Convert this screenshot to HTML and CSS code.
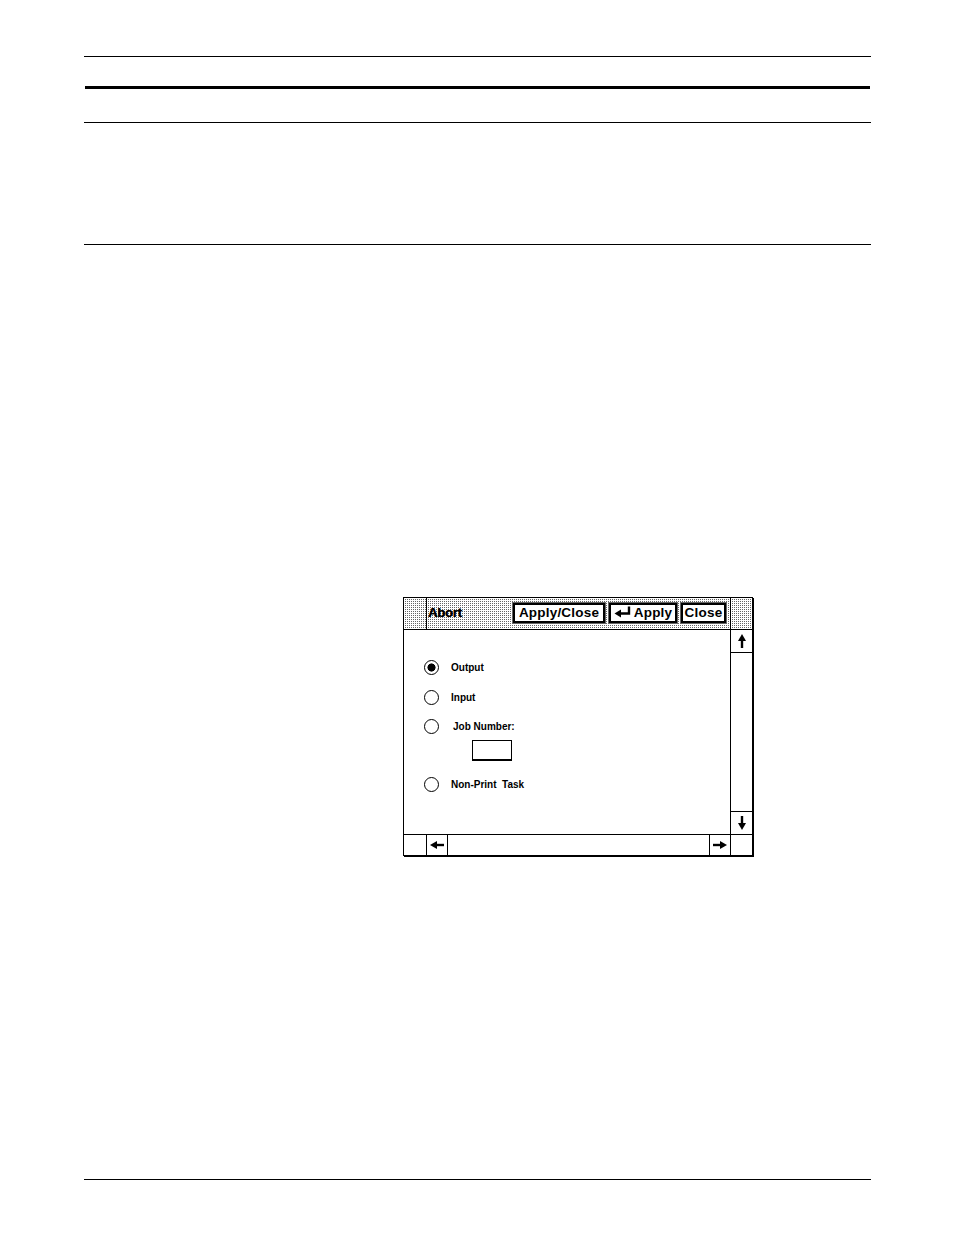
FILE: index.html
```html
<!DOCTYPE html>
<html>
<head>
<meta charset="utf-8">
<title>Abort</title>
<link rel="stylesheet" href="styles.css">
</head>
<body>
<div class="page">
  <div class="rule rule-1"></div>
  <div class="rule rule-thick"></div>
  <div class="rule rule-3"></div>
  <div class="rule rule-4"></div>

  <div class="dialog">
    <div class="cell stipple"></div>
    <div class="cell stipple title">
      <span class="title-text">Abort</span>
      <div class="buttons">
        <span class="btn btn-applyclose">Apply/Close</span>
        <span class="btn btn-apply"><svg class="ret" width="18" height="12" viewBox="0 0 18 12"><path d="M15 0.5 V7.5 H6" fill="none" stroke="#000" stroke-width="2.4"/><path d="M0.5 7.5 L7 3.5 L7 11.5 Z" fill="#000"/></svg>Apply</span>
        <span class="btn btn-close">Close</span>
      </div>
    </div>
    <div class="cell stipple"></div>

    <div class="cell content">
      <div class="opt opt-1"><span class="radio on"></span><span class="label">Output</span></div>
      <div class="opt opt-2"><span class="radio"></span><span class="label">Input</span></div>
      <div class="opt opt-3"><span class="radio"></span><span class="label label-job">Job Number:</span></div>
      <div class="jobbox"></div>
      <div class="opt opt-4"><span class="radio"></span><span class="label">Non-Print&nbsp; Task</span></div>
    </div>
    <div class="cell vscroll">
      <div class="arrowbox up"><svg width="12" height="16" viewBox="0 0 12 16"><path d="M6 1 L10 8 L2 8 Z" fill="#000"/><path d="M6 7 V15" stroke="#000" stroke-width="2.4"/></svg></div>
      <div class="track"></div>
      <div class="arrowbox down"><svg width="12" height="16" viewBox="0 0 12 16"><path d="M6 15 L10 8 L2 8 Z" fill="#000"/><path d="M6 1 V9" stroke="#000" stroke-width="2.4"/></svg></div>
    </div>

    <div class="cell"></div>
    <div class="cell hscroll">
      <div class="harrow left"><svg width="16" height="10" viewBox="0 0 16 10"><path d="M1 5 L8 1 L8 9 Z" fill="#000"/><path d="M7 5 H15" stroke="#000" stroke-width="2.4"/></svg></div>
      <div class="track"></div>
      <div class="harrow right"><svg width="16" height="10" viewBox="0 0 16 10"><path d="M15 5 L8 1 L8 9 Z" fill="#000"/><path d="M1 5 H9" stroke="#000" stroke-width="2.4"/></svg></div>
    </div>
    <div class="cell"></div>
  </div>

  <div class="rule rule-bottom"></div>
</div>
</body>
</html>
```
FILE: styles.css
```css
html, body {
  margin: 0;
  padding: 0;
  background: #fff;
}
body {
  width: 954px;
  font-family: "Liberation Sans", Arial, sans-serif;
  color: #000;
}
.page {
  padding-top: 56px;
}
.rule {
  margin-left: 84px;
  width: 787px;
  height: 1px;
  background: #000;
}
.rule-thick {
  margin-top: 29px;
  height: 3px;
  margin-left: 85px;
  width: 785px;
}
.rule-3 { margin-top: 33px; }
.rule-4 { margin-top: 121px; }
.rule-bottom { margin-top: 323px; }

.dialog {
  margin-top: 352px;
  margin-left: 403px;
  width: 348px;
  height: 257px;
  border: 1px solid #000;
  background: #000;
  box-shadow: 1px 1px 0 #000;
  display: grid;
  grid-template-columns: 22px 303px 21px;
  grid-template-rows: 31px 204px 20px;
  gap: 1px;
}
.cell {
  background: #fff;
  min-width: 0;
  min-height: 0;
}
.stipple {
  background-color: #fff;
  background-image:
    linear-gradient(90deg, #fff 50%, transparent 50%),
    linear-gradient(#fff 50%, #666 50%);
  background-size: 2px 2px;
}
.title {
  display: flex;
  align-items: center;
  justify-content: space-between;
  padding: 0 4px 0 1px;
}
.title-text {
  font-weight: bold;
  font-size: 13px;
  letter-spacing: -0.2px;
  margin-top: -2px;
  text-shadow: 0.4px 0 0 #000;
}
.buttons {
  display: flex;
  gap: 4px;
  margin-top: -2px;
}
.btn {
  box-sizing: border-box;
  height: 20px;
  background: #fff;
  border: 2px solid #000;
  outline: 1px solid #666;
  font-weight: bold;
  font-size: 13.5px;
  letter-spacing: 0.2px;
  display: flex;
  align-items: center;
  justify-content: center;
  line-height: 1;
  white-space: nowrap;
}
.btn-applyclose { width: 92px; }
.btn-apply { width: 68px; }
.btn-close { width: 45px; }
.ret { margin-right: 2px; margin-top: -1px; }

.content {
  grid-column: 1 / span 2;
  padding: 30px 0 0 20px;
  display: flex;
  flex-direction: column;
}
.opt {
  display: flex;
  align-items: center;
  height: 15px;
}
.opt-2 { margin-top: 15px; }
.opt-3 { margin-top: 14px; }
.opt-4 { margin-top: 16px; }
.radio {
  box-sizing: border-box;
  width: 15px;
  height: 15px;
  border: 1.5px solid #000;
  border-radius: 50%;
  background: #fff;
  flex: none;
}
.radio.on {
  background: radial-gradient(circle, #000 0 3.8px, #fff 4.3px);
}
.label {
  margin-left: 12px;
  font-weight: bold;
  font-size: 10px;
}
.label-job { margin-left: 14px; }
.jobbox {
  box-sizing: border-box;
  margin-top: 6px;
  margin-left: 48px;
  width: 40px;
  height: 21px;
  border: 1px solid #000;
  border-bottom-width: 2px;
}

.vscroll {
  display: flex;
  flex-direction: column;
}
.arrowbox {
  height: 22px;
  display: flex;
  align-items: center;
  justify-content: center;
}
.arrowbox.up { border-bottom: 1px solid #000; }
.arrowbox.down { border-top: 1px solid #000; }
.track { flex: 1; }

.hscroll {
  display: flex;
}
.harrow {
  width: 20px;
  display: flex;
  align-items: center;
  justify-content: center;
}
.harrow.left { border-right: 1px solid #000; }
.harrow.right { border-left: 1px solid #000; }
```
